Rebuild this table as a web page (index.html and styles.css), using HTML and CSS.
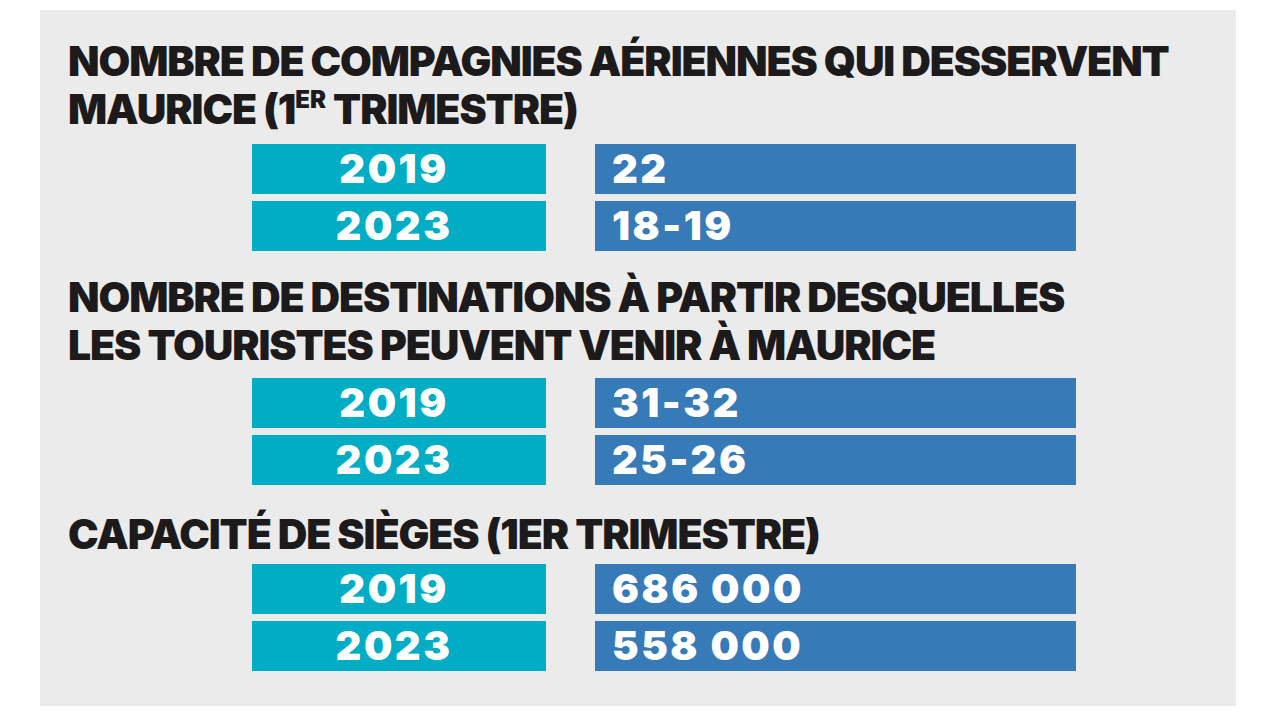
FILE: index.html
```html
<!DOCTYPE html>
<html lang="fr">
<head>
<meta charset="utf-8">
<link rel="stylesheet" href="styles.css">
</head>
<body>
<div class="panel">
  <section class="block block-1">
    <h2 class="title">NOMBRE DE COMPAGNIES AÉRIENNES QUI DESSERVENT<br>MAURICE (1<sup class="sup">ER</sup> TRIMESTRE)</h2>
    <div class="rows">
      <div class="year">2019</div><div class="value">22</div>
      <div class="year">2023</div><div class="value">18-19</div>
    </div>
  </section>
  <section class="block block-2">
    <h2 class="title">NOMBRE DE DESTINATIONS À PARTIR DESQUELLES<br>LES TOURISTES PEUVENT VENIR À MAURICE</h2>
    <div class="rows">
      <div class="year">2019</div><div class="value">31-32</div>
      <div class="year">2023</div><div class="value">25-26</div>
    </div>
  </section>
  <section class="block block-3">
    <h2 class="title">CAPACITÉ DE SIÈGES (1ER TRIMESTRE)</h2>
    <div class="rows">
      <div class="year">2019</div><div class="value">686 000</div>
      <div class="year">2023</div><div class="value">558 000</div>
    </div>
  </section>
</div>
</body>
</html>
```

FILE: styles.css
```css
html, body {
  margin: 0;
  padding: 0;
  background: #ffffff;
}
body {
  width: 1280px;
  height: 720px;
  overflow: hidden;
}
.panel {
  margin: 10px 0 0 40px;
  width: 1196px;
  height: 696px;
  box-sizing: border-box;
  background: #ebebeb;
  padding: 27px 0 0 28px;
  font-family: "Inter", "Liberation Sans", sans-serif;
}
.title {
  margin: 0;
  font-size: 41px;
  line-height: 48px;
  font-weight: 900;
  color: #1d1a1b;
  letter-spacing: -1.1px;
}
.sup {
  font-size: 24px;
  line-height: 0;
  vertical-align: 16px;
  letter-spacing: 0;
}
.rows {
  display: grid;
  grid-template-columns: 294px 481px;
  column-gap: 49px;
  row-gap: 7px;
  margin-left: 184px;
}
.year, .value {
  height: 50px;
  color: #ffffff;
  font-size: 40px;
  font-weight: 900;
  line-height: 50px;
  letter-spacing: 2.5px;
}
.year {
  background: #00adc5;
  text-align: center;
  padding-right: 10px;
  box-sizing: border-box;
}
.value {
  background: #367ab8;
  padding-left: 17px;
}
.block-1 .rows { margin-top: 11px; }
.block-2 { margin-top: 22px; }
.block-2 .rows { margin-top: 9px; }
.block-3 { margin-top: 25px; }
.block-3 .rows { margin-top: 6px; }
```
